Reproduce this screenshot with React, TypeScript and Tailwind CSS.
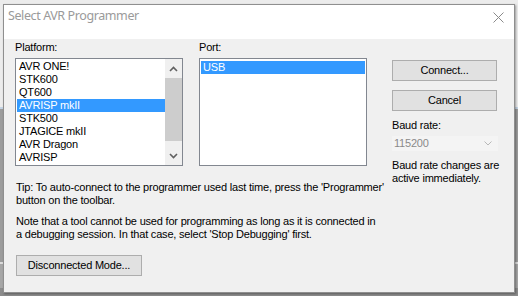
import React from "react";

const platforms = ["AVR ONE!", "STK600", "QT600", "AVRISP mkII", "STK500", "JTAGICE mkII", "AVR Dragon", "AVRISP"];

function Chevron({ up }: { up?: boolean }) {
  return (
    <svg width="9" height="6" viewBox="0 0 9 6">
      <polyline
        points={up ? "1,5 4.5,1.5 8,5" : "1,1 4.5,4.5 8,1"}
        fill="none"
        stroke="#606060"
        strokeWidth="1.6"
      />
    </svg>
  );
}

function Btn({ label, className }: { label: string; className: string }) {
  return (
    <div
      className={
        "flex shrink-0 items-center justify-center border border-[#adadad] bg-[#e1e1e1] text-[11px] leading-[13px] tracking-[-0.2px] text-black " +
        className
      }
    >
      {label}
    </div>
  );
}

export default function App() {
  return (
    <div className="relative h-[296px] w-[518px] overflow-hidden" style={{ fontFamily: '"Liberation Sans", Arial, sans-serif' }}>
      {/* desktop behind */}
      <div className="flex h-full w-full flex-col">
        <div className="h-[107px] bg-[#ececec]" />
        <div className="h-[2px] bg-[#c4d3e3]" />
        <div className="h-[153px] bg-[#9c9c9c]" />
        <div className="h-[2px] bg-[#dcdcdc]" />
        <div className="h-[24px] bg-[#a6a6a6]" />
        <div className="flex-1 bg-[#8c8c8c]" />
      </div>

      {/* dialog window */}
      <div className="absolute left-[3px] top-[4px] flex h-[289px] w-[512px] flex-col border border-[#8f8f8f] bg-[#f0f0f0] shadow-[1px_1px_2px_rgba(0,0,0,0.35)]">
        {/* title bar */}
        <div className="flex h-[34px] shrink-0 items-start justify-between bg-white pl-[4px] pr-[10px]">
          <span
            className="mt-[3px] text-[12.5px] leading-[16px] tracking-[-0.4px] text-[#9a9a9a]"
            style={{ fontFamily: '"Noto Sans", "Open Sans", sans-serif' }}
          >
            Select AVR Programmer
          </span>
          <svg className="mt-[7px]" width="11" height="11" viewBox="0 0 11 11">
            <path d="M0.5 0.5 L10.5 10.5 M10.5 0.5 L0.5 10.5" stroke="#8a8a8a" strokeWidth="1" />
          </svg>
        </div>

        {/* content */}
        <div className="flex flex-col pl-[11px] pt-[2px] text-[11px] leading-[13px] tracking-[-0.2px] text-black">
          <div className="flex h-[125px]">
            {/* platform */}
            <div className="flex w-[168px] flex-col">
              <div className="h-[17px]">Platform:</div>
              <div className="flex h-[108px] border border-[#828790] bg-white">
                <div className="flex flex-1 flex-col pl-px pt-px">
                  {platforms.map((p, i) => (
                    <div
                      key={p}
                      className={
                        "h-[13px] pl-[2px] leading-[13px] " + (i === 3 ? "bg-[#3399ff] text-white" : "text-black")
                      }
                    >
                      {p}
                    </div>
                  ))}
                </div>
                <div className="flex w-[17px] flex-col items-center bg-[#f0f0f0] py-px">
                  <div className="flex h-[17px] w-full items-center justify-center">
                    <Chevron up />
                  </div>
                  <div className="flex w-full flex-1 flex-col">
                    <div className="mt-[1px] h-[63px] w-full bg-[#cdcdcd]" />
                  </div>
                  <div className="flex h-[17px] w-full items-center justify-center">
                    <Chevron />
                  </div>
                </div>
              </div>
            </div>

            {/* port */}
            <div className="ml-[16px] flex w-[168px] flex-col">
              <div className="h-[17px]">Port:</div>
              <div className="flex h-[108px] flex-col border border-[#828790] bg-white p-px pt-[2px]">
                <div className="h-[13px] bg-[#3399ff] pl-[2px] text-white">USB</div>
              </div>
            </div>

            {/* right column */}
            <div className="ml-[25px] flex w-[110px] flex-col whitespace-nowrap pt-[19px]">
              <Btn label="Connect..." className="h-[21px] w-[105px]" />
              <Btn label="Cancel" className="mt-[9px] h-[21px] w-[105px]" />
              <div className="mt-[8px] h-[17px] shrink-0 text-black">Baud rate:</div>
              <div className="flex h-[15px] w-[106px] shrink-0 items-center justify-between bg-[#f4f4f4] pl-[2px] pr-[6px] text-[#8a8a8a]">
                <span>115200</span>
                <svg width="8" height="5" viewBox="0 0 8 5">
                  <polyline points="0.5,0.5 4,4 7.5,0.5" fill="none" stroke="#b8b8b8" strokeWidth="1" />
                </svg>
              </div>
              <div className="mt-[8px] shrink-0">
                Baud rate changes are
                <br />
                active immediately.
              </div>
            </div>
          </div>

          <div className="mt-[15px] pl-px">
            Tip: To auto-connect to the programmer used last time, press the 'Programmer'
            <br />
            button on the toolbar.
          </div>
          <div className="mt-[8px] pl-px">
            Note that a tool cannot be used for programming as long as it is connected in
            <br />
            a debugging session. In that case, select 'Stop Debugging' first.
          </div>
          <Btn label="Disconnected Mode..." className="mt-[14px] ml-px h-[21px] w-[126px]" />
        </div>
      </div>
    </div>
  );
}
